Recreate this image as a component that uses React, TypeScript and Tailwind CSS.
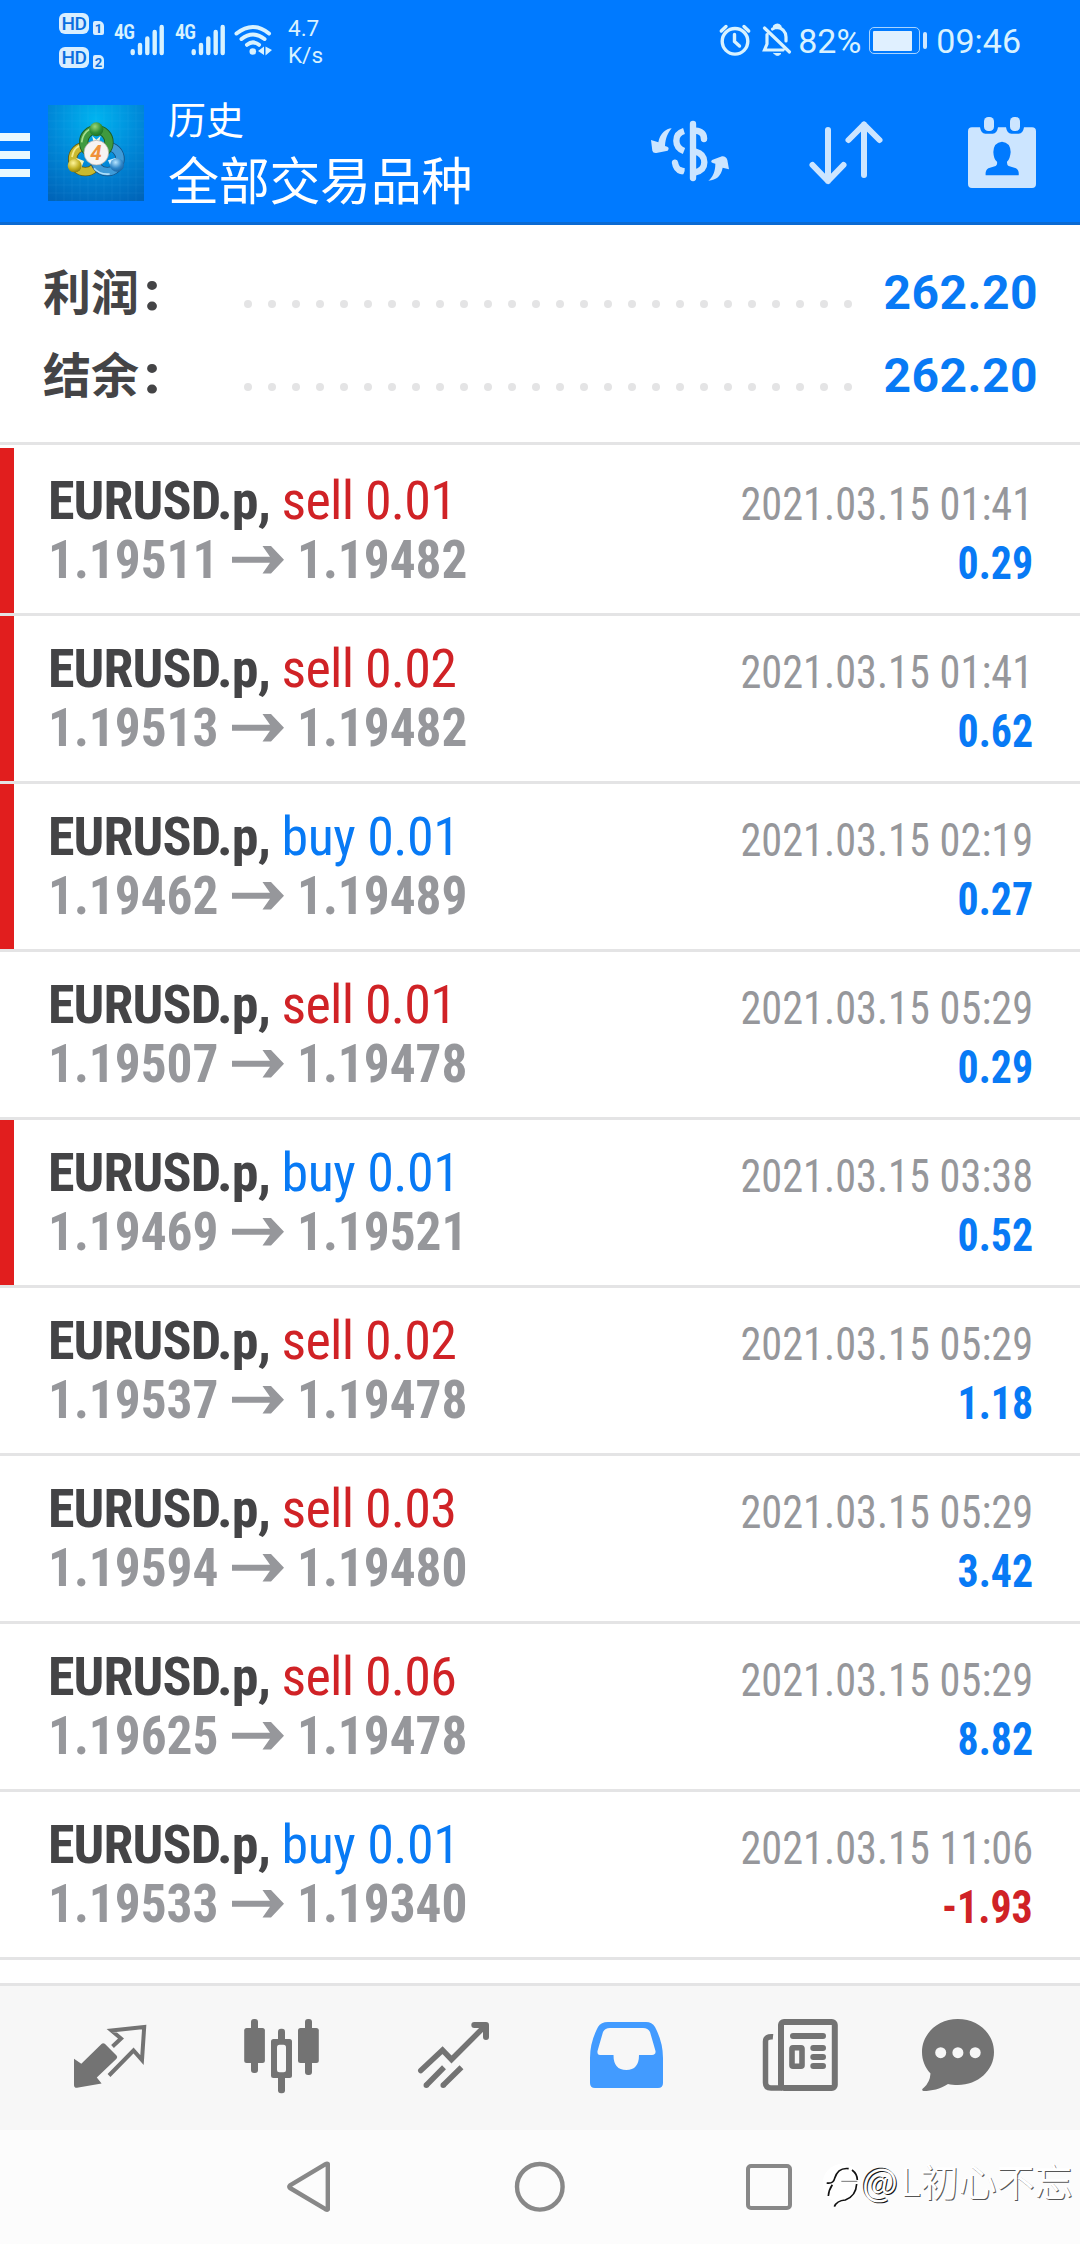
import React from 'react';

type Side = 'buy' | 'sell';

interface Deal {
  side: Side;
  lots: string;
  open: string;
  close: string;
  time: string;
  profit: string;
  marked?: boolean;
}

const DEALS: Deal[] = [
  { side: 'sell', lots: '0.01', open: '1.19511', close: '1.19482', time: '2021.03.15 01:41', profit: '0.29', marked: true },
  { side: 'sell', lots: '0.02', open: '1.19513', close: '1.19482', time: '2021.03.15 01:41', profit: '0.62', marked: true },
  { side: 'buy', lots: '0.01', open: '1.19462', close: '1.19489', time: '2021.03.15 02:19', profit: '0.27', marked: true },
  { side: 'sell', lots: '0.01', open: '1.19507', close: '1.19478', time: '2021.03.15 05:29', profit: '0.29' },
  { side: 'buy', lots: '0.01', open: '1.19469', close: '1.19521', time: '2021.03.15 03:38', profit: '0.52', marked: true },
  { side: 'sell', lots: '0.02', open: '1.19537', close: '1.19478', time: '2021.03.15 05:29', profit: '1.18' },
  { side: 'sell', lots: '0.03', open: '1.19594', close: '1.19480', time: '2021.03.15 05:29', profit: '3.42' },
  { side: 'sell', lots: '0.06', open: '1.19625', close: '1.19478', time: '2021.03.15 05:29', profit: '8.82' },
  { side: 'buy', lots: '0.01', open: '1.19533', close: '1.19340', time: '2021.03.15 11:06', profit: '-1.93' },
];

/* ---------- status bar ---------- */

function HdBadge({ n }: { n: string }) {
  return (
    <div className="flex items-end gap-1">
      <span className="flex h-[21px] w-[30px] items-center justify-center rounded-[6px] bg-[#d8eeff] font-['Roboto'] text-[19px] leading-none font-medium tracking-[-0.5px] text-[#0a6fe0]">
        HD
      </span>
      <span className="-mb-px flex h-[14px] w-[11px] items-center justify-center rounded-[2px] rounded-tr-[5px] bg-[#d8eeff] font-['Roboto'] text-[13px] leading-none font-bold text-[#0a6fe0]">
        {n}
      </span>
    </div>
  );
}

function Signal() {
  return (
    <div className="relative h-[31px] w-[51px]">
      <span className="absolute -top-[3px] left-0 font-['Roboto_Condensed'] text-[20px] leading-[20px] font-semibold tracking-[-0.8px] text-[#d8f2ff]">
        4G
      </span>
      <svg viewBox="131 24 35 32" className="absolute right-0 bottom-0 h-8 w-[35px]">
        <g stroke="#d8f2ff" strokeWidth="4.4" strokeLinecap="round">
          <path d="M133.7 51.3V53M141 45V53M148.3 38.5V53M155.7 32V53M162.7 27V53" />
        </g>
      </svg>
    </div>
  );
}

function StatusBar() {
  return (
    <div className="flex h-[80px] items-start justify-between pr-[59px] pl-[59px] text-[#d8f2ff]">
      <div className="flex">
        <div className="flex flex-col gap-[13px] pt-[13px]">
          <HdBadge n="1" />
          <HdBadge n="2" />
        </div>
        <div className="ml-[10px] flex gap-[10px] pt-[25px]">
          <Signal />
          <Signal />
        </div>
        <svg viewBox="233 22 40 36" className="mt-[22px] ml-[7px] h-[36px] w-[40px]" fill="none" stroke="#d8f2ff" strokeWidth="4" strokeLinecap="round">
          <path d="M236.5 33.5Q253 20.500 269 33.500M241.500 39Q253 30 264.500 39M247 44.800Q253 40 259 44.800" />
          <circle cx="252.800" cy="51.500" r="3.300" fill="#d8f2ff" stroke="none" />
          <path d="M264 46.500V55L258 51ZM265.500 46.500V55.500L272 50Z" fill="#d8f2ff" stroke="none" />
        </svg>
        <div className="ml-[15px] pt-[15px] font-['Roboto'] text-[22.500px] leading-[27px]">
          <div className="text-[#d8f2ff]">4.7</div>
          <div className="text-[#d8f2ff]">K/s</div>
        </div>
      </div>

      <div className="flex pt-[20px] font-['Roboto'] text-[34px] leading-[42px]">
        <svg viewBox="718 20 34 40" className="h-10 w-[34px]" fill="none" stroke="#d8f2ff" strokeWidth="3.400" strokeLinecap="round">
          <circle cx="735" cy="41.300" r="12.800" />
          <path d="M734.500 34.500V41.500L739.500 46M721.300 31L726 26.500M748.700 31L744 26.500" />
        </svg>
        <svg viewBox="761 20 34 40" className="ml-[9px] h-10 w-[34px]" fill="none" stroke="#d8f2ff" strokeWidth="3.200" strokeLinecap="round">
          <path d="M764.500 28L789.500 52M767 34.500V44L764.500 50H783M772.500 29Q775 27.500 777 27.500Q785.500 28.500 786 37V41" />
          <path d="M774.500 26.500Q777.500 23.500 780 26.500" />
          <path d="M774 53.500H781Q777.500 57.500 774 53.500Z" fill="#d8f2ff" strokeWidth="1" />
        </svg>
        <span className="ml-[3px]">82%</span>
        <div className="mt-[7px] ml-[8px] flex h-[27px] w-[51px] rounded-[5px] border-[1.500px] border-[#a8d4ff] p-[2.500px]">
          <div className="h-full w-[39px] rounded-[1px] bg-[#e0f0ff]" />
        </div>
        <div className="mt-[12px] ml-[3px] h-[17px] w-[4px] rounded-full bg-[#cfe8ff]" />
        <span className="ml-[9px]">09:46</span>
      </div>
    </div>
  );
}

/* ---------- app bar ---------- */

function AppLogo() {
  return (
    <svg viewBox="0 0 288 288" className="h-24 w-24">
      <defs>
        <radialGradient id="sky" cx="50%" cy="15%" r="95%">
          <stop offset="0" stopColor="#00b4f0" />
          <stop offset=".5" stopColor="#0088d8" />
          <stop offset="1" stopColor="#0064b8" />
        </radialGradient>
        <radialGradient id="green" cx="40%" cy="30%" r="75%">
          <stop offset="0" stopColor="#9bd67a" />
          <stop offset=".6" stopColor="#2f8f35" />
          <stop offset="1" stopColor="#1b6a24" />
        </radialGradient>
        <radialGradient id="gold" cx="40%" cy="30%" r="75%">
          <stop offset="0" stopColor="#fff59a" />
          <stop offset=".6" stopColor="#c2b021" />
          <stop offset="1" stopColor="#86780c" />
        </radialGradient>
        <radialGradient id="azure" cx="40%" cy="30%" r="75%">
          <stop offset="0" stopColor="#b5e4ff" />
          <stop offset=".6" stopColor="#2f86c8" />
          <stop offset="1" stopColor="#1660a0" />
        </radialGradient>
      </defs>
      <rect width="288" height="288" fill="url(#sky)" />
      <path
        d="M24 0V288M48 0V288M72 0V288M96 0V288M120 0V288M144 0V288M168 0V288M192 0V288M216 0V288M240 0V288M264 0V288M0 24H288M0 48H288M0 72H288M0 96H288M0 120H288M0 144H288M0 168H288M0 192H288M0 216H288M0 240H288M0 264H288"
        stroke="#6fd0ff"
        strokeOpacity=".13"
        strokeWidth="2"
      />
      <g fill="none">
        <circle cx="112" cy="162" r="38" stroke="#5f5a10" strokeWidth="28" />
        <circle cx="112" cy="162" r="38" stroke="#c9b92f" strokeWidth="23" />
        <path d="M72 156Q78 120 112 118" stroke="#f3eb8c" strokeWidth="5" />
        <circle cx="178" cy="162" r="38" stroke="#154f80" strokeWidth="28" />
        <circle cx="178" cy="162" r="38" stroke="#3f9bd8" strokeWidth="23" />
        <path d="M138 190Q155 210 185 207" stroke="#b0e0fa" strokeWidth="5" />
        <circle cx="145" cy="112" r="38" stroke="#1d5c22" strokeWidth="28" />
        <circle cx="145" cy="112" r="38" stroke="#3f9a3f" strokeWidth="23" />
        <path d="M101 112Q104 84 126 72" stroke="#a5de8e" strokeWidth="5" />
      </g>
      <path d="M132 92L145 104L158 92L152 116H138Z" fill="#e9f6e2" />
      <path d="M84 158L108 168L100 188L92 176Z" fill="#f6f2b8" />
      <path d="M204 158L180 166L190 188L198 176Z" fill="#d6f0ff" />
      <circle cx="145" cy="73" r="21" fill="url(#green)" />
      <ellipse cx="80" cy="182" rx="21" ry="20" fill="url(#gold)" />
      <ellipse cx="207" cy="180" rx="21" ry="20" fill="url(#azure)" />
      <circle cx="145" cy="143" r="37" fill="#f6f4f2" stroke="#a9a9a4" strokeWidth="2" />
      <text x="144" y="165" textAnchor="middle" fontFamily="Roboto" fontWeight="700" fontStyle="italic" fontSize="62" fill="#f0913a">
        4
      </text>
    </svg>
  );
}

function CurrencyIcon() {
  return (
    <svg viewBox="0 0 300 270" className="h-[90px] w-[100px]" fill="none" stroke="#cce5ff" strokeWidth="19">
      <path d="M159 42V204" strokeLinecap="round" />
      <path d="M132 63Q109 70 109 92Q109 114 132 123M166 62Q192 64 192 86M166 125Q193 132 193 157Q193 181 166 187" />
      <path d="M192 84V87M105 158Q108 178 124 183" strokeLinecap="round" />
      <path d="M118 180L132 184" />
      <path d="M95 55C78 56 60 70 55 97L33 90L37 122Q39 130 49 129L83 122Q92 111 75 108C76 84 84 68 95 55Z" fill="#cce5ff" stroke="none" />
      <path d="M205 212C230 210 243 198 248 173L267 178L262 150Q258 138 246 139L216 150Q208 158 226 161C226 185 218 202 205 212Z" fill="#cce5ff" stroke="none" />
    </svg>
  );
}

function SortIcon() {
  return (
    <svg viewBox="808 119 76 67" className="h-[67px] w-[76px]" fill="none" stroke="#cce5ff" strokeWidth="6" strokeLinecap="round" strokeLinejoin="round">
      <path d="M828 130V181M812.500 165L828 181L843.500 165M864 175V124.500M848.500 140L864 124.500L879.500 140" />
    </svg>
  );
}

function CalendarIcon() {
  return (
    <svg viewBox="1044 350 204 213" className="h-[71px] w-[68px]">
      <path
        d="M1056 381H1080Q1083 400 1096 400H1118Q1131 400 1134 381H1158Q1161 400 1174 400H1196Q1209 400 1212 381H1236Q1248 381 1248 393V551Q1248 563 1236 563H1056Q1044 563 1044 551V393Q1044 381 1056 381Z"
        fill="#cce5ff"
      />
      <rect x="1092" y="350" width="30" height="42" rx="13" fill="#cce5ff" />
      <rect x="1170" y="350" width="30" height="42" rx="13" fill="#cce5ff" />
      <path
        d="M1146 424Q1171 426 1172 455Q1170 478 1161 484Q1160 493 1166 497L1188 504Q1198 510 1196 525H1097Q1095 510 1105 504L1127 497Q1133 493 1131 484Q1121 478 1120 455Q1121 426 1146 424Z"
        fill="#007aff"
      />
    </svg>
  );
}

function AppBar() {
  return (
    <div className="flex h-[142px] items-start">
      <div className="mt-[53px] flex w-[30px] flex-col gap-[10px]">
        <span className="h-2 bg-[#e8f8ff]" />
        <span className="h-2 bg-[#e8f8ff]" />
        <span className="h-2 bg-[#e8f8ff]" />
      </div>
      <div className="mt-[25px] ml-[18px]">
        <AppLogo />
      </div>
      <div className="mt-[8px] ml-[24px] font-['Noto_Sans_CJK_SC',sans-serif] whitespace-nowrap text-white">
        <div className="text-[38px] leading-[60px]">历史</div>
        <div className="text-[51px] leading-[60px] tracking-[-0.3px]">全部交易品种</div>
      </div>
      <div className="ml-auto flex items-start pr-[44px]">
        <div className="mt-[30px]">
          <CurrencyIcon />
        </div>
        <div className="mt-[39px] ml-[68px]">
          <SortIcon />
        </div>
        <div className="mt-[36.500px] ml-[84px]">
          <CalendarIcon />
        </div>
      </div>
    </div>
  );
}

/* ---------- summary ---------- */

function SummaryRow({ label, value }: { label: string; value: string }) {
  return (
    <div className="flex h-[83px] items-start pl-[43px]">
      <div className="w-[201px] pt-px font-['Noto_Sans_CJK_SC',sans-serif] text-[48px] leading-[83px] font-bold text-[#444446]">
        {label}
        <span className="ml-[5px] font-['Roboto'] text-[54px] leading-none font-black">:</span>
      </div>
      <div className="mt-[53px] flex w-[608px] justify-between">
        {Array.from({ length: 26 }, (_, i) => (
          <span key={i} className="h-2 w-2 rounded-full bg-[#e4e4e5]" />
        ))}
      </div>
      <div className="ml-auto pt-[4px] pr-[42px] font-['Roboto'] text-[48px] leading-[83px] font-bold tracking-[0.5px] text-[#087af5]">
        {value}
      </div>
    </div>
  );
}

/* ---------- deals ---------- */

function PriceArrow() {
  return (
    <svg viewBox="0 0 52 28" className="h-7 w-[52px]" fill="#96979b">
      <path d="M0 10.800H38L30.500 0H39L52 13.800L39 27.500H30.500L38 16.800H0Z" />
    </svg>
  );
}

function DealRow({ deal }: { deal: Deal }) {
  const sideColor = deal.side === 'sell' ? 'text-[#d02226] tracking-[-0.75px]' : 'text-[#087af5] tracking-[-0.5px]';
  const profitColor = deal.profit.startsWith('-') ? 'text-[#d02226]' : 'text-[#087af5]';
  return (
    <div className="flex h-[168px] items-stretch border-b-[3px] border-[#e4e4e5] font-['Roboto_Condensed']">
      <div className={deal.marked ? 'w-[14px] bg-[#e11e1e]' : 'w-[14px]'} />
      <div className="flex flex-1 justify-between pr-[47px] pl-[34px] whitespace-pre">
        <div className="pt-[23px] text-[54px] leading-[59px]">
          <div>
            <span className="font-bold tracking-[-0.9px] text-[#444446]">EURUSD.p, </span>
            <span className={sideColor}>
              {deal.side} {deal.lots}
            </span>
          </div>
          <div className="flex font-bold text-[#96979b]">
            <span className="w-[184px] origin-left scale-x-[0.95]">{deal.open}</span>
            <span className="mt-[16px] w-[65px]">
              <PriceArrow />
            </span>
            <span className="origin-left scale-x-[0.95]">{deal.close}</span>
          </div>
        </div>
        <div className="flex flex-col items-end pt-[27px] text-[46px] leading-[59px]">
          <div className="origin-right scale-x-[0.92] text-[#96979b]">{deal.time}</div>
          <div className={`origin-right scale-x-[0.91] font-bold ${profitColor}`}>{deal.profit}</div>
        </div>
      </div>
    </div>
  );
}

/* ---------- bottom tabs ---------- */

function TradeIcon() {
  return (
    <svg viewBox="72 2022 78 70" className="h-[70px] w-[78px]">
      <path d="M112.500 2046.500L121 2038.500L111.500 2030.500L144.200 2027L142 2060L133.500 2050.500L109 2075.500" fill="none" stroke="#737373" strokeWidth="4" />
      <path d="M74 2058.700L81.300 2063.700L101.500 2044Q103 2042.500 104.800 2043.800L116.500 2055.500Q118 2057 116.500 2058.800L96.800 2077.500L101.600 2083.500L77 2087.800Q74 2088 74 2085Z" fill="#737373" />
    </svg>
  );
}

function ChartIcon() {
  return (
    <svg viewBox="242 2017 79 78" className="h-[78px] w-[79px]" fill="#737373">
      <rect x="251" y="2019" width="7" height="54" rx="3" />
      <rect x="244.200" y="2028" width="20.700" height="35" rx="2.500" />
      <rect x="305" y="2019" width="7" height="56" rx="3" />
      <rect x="298" y="2028" width="20.800" height="35" rx="2.500" />
      <rect x="278" y="2028.700" width="7" height="64.500" rx="3" />
      <rect x="271" y="2039" width="21" height="39" rx="2.500" />
      <rect x="277" y="2044.700" width="9" height="27.500" rx="2.500" fill="#f7f7f7" />
    </svg>
  );
}

function TrendIcon() {
  return (
    <svg viewBox="416 2019 76 72" className="h-[72px] w-[76px]" fill="none" stroke="#737373" strokeWidth="5.500">
      <path d="M420.800 2070.500L442.500 2050.200L451.500 2059.500L485 2026" strokeLinecap="round" />
      <path d="M474.300 2025H486V2037" strokeWidth="6" strokeLinecap="round" strokeLinejoin="round" />
      <path d="M426.300 2085.300H426.310M443.200 2085.300H443.210" strokeLinecap="round" />
      <path d="M426.300 2085.300L444 2067.300M443.200 2085.300L461.500 2067.300" />
    </svg>
  );
}

function InboxIcon() {
  return (
    <svg viewBox="590 2022 73 66" className="h-[66px] w-[73px]">
      <path
        fillRule="evenodd"
        d="M608 2022H646Q652 2022 655 2027Q663 2042 663 2058V2083Q663 2088 658 2088H595Q590 2088 590 2083V2058Q590 2042 598 2027Q601 2022 608 2022ZM610 2028Q605 2028 603 2032L597.500 2051Q597 2055 600 2055H613.500Q613.500 2070 626.300 2070Q639 2070 639 2055H652Q656 2055 655.500 2051L650 2032Q648 2028 643 2028Z"
        fill="#429bff"
      />
    </svg>
  );
}

function NewsIcon() {
  return (
    <svg viewBox="762 2018 77 74" className="h-[74px] w-[77px]" fill="none" stroke="#737373">
      <rect x="781" y="2022" width="53.800" height="66" rx="3" strokeWidth="6" />
      <path d="M773 2036.800Q765.500 2036 765.500 2041.500V2082.500Q765.500 2088 771 2088H782" strokeWidth="5.500" />
      <path d="M793 2036H823M813.300 2048H823M813.300 2057H823M813.300 2066H823" strokeWidth="6" strokeLinecap="round" />
      <rect x="792" y="2047.800" width="10" height="18.400" rx="1" strokeWidth="5.600" />
    </svg>
  );
}

function ChatIcon() {
  return (
    <svg viewBox="921 2018 74 74" className="h-[74px] w-[74px]">
      <path
        d="M957.800 2019C978 2019 994 2033.500 994 2052C994 2070.500 978 2085 957.800 2085C954 2085 951 2084.600 948 2084C940 2089 932 2091 923.500 2091Q920.500 2090 924 2087.500Q930 2082 930.500 2073.500C925 2067.500 922 2060 922 2052C922 2033.500 938 2019 957.800 2019Z"
        fill="#737373"
      />
      <circle cx="940.700" cy="2052.700" r="5.500" fill="#f7f7f7" />
      <circle cx="957.900" cy="2052.700" r="5.500" fill="#f7f7f7" />
      <circle cx="975.200" cy="2052.700" r="5.500" fill="#f7f7f7" />
    </svg>
  );
}

function TabBar() {
  return (
    <div className="flex h-[147px] items-start border-t-[3px] border-[#e4e4e5] bg-[#f7f7f7]">
      <div className="mt-[36px] ml-[72px]"><TradeIcon /></div>
      <div className="mt-[31px] ml-[92px]"><ChartIcon /></div>
      <div className="mt-[33px] ml-[95px]"><TrendIcon /></div>
      <div className="mt-[36px] ml-[98px]"><InboxIcon /></div>
      <div className="mt-[32px] ml-[99px]"><NewsIcon /></div>
      <div className="mt-[32px] ml-[82px]"><ChatIcon /></div>
    </div>
  );
}

function SystemNav() {
  return (
    <div className="relative flex h-[114px] items-start bg-[#fcfcfc] pt-[30px]">
      <svg viewBox="285 2160 47 54" className="ml-[285px] h-[54px] w-[47px]" fill="none" stroke="#888" strokeWidth="4.400" strokeLinejoin="round">
        <path d="M327.800 2164V2209.500Q327 2210 325.500 2209.200L290 2188Q288.500 2186.700 290 2185.400L325.500 2164.200Q327 2163.300 327.800 2164Z" />
      </svg>
      <svg viewBox="513 2160 54 54" className="ml-[181px] h-[54px] w-[54px]" fill="none" stroke="#888" strokeWidth="4.400">
        <circle cx="539.800" cy="2186.800" r="22.800" />
      </svg>
      <div className="mt-[4px] ml-[179px] h-[46px] w-[46px] rounded-[5px] border-[4.400px] border-[#888]" />

      {/* watermark */}
      <div className="absolute top-[25px] left-[820px] flex font-['Noto_Sans_CJK_SC',sans-serif] text-[38px] leading-[50px] text-white">
        <svg viewBox="0 330 120 150" className="mt-[5px] h-[50px] w-[40px]" fill="none">
          <circle cx="66" cy="400" r="58" fill="#fff" />
          <path d="M20 399Q40 402 44 385Q54 352 86 356M37 404Q26 420 25 438M96 360Q112 372 112 390M110 402Q108 438 76 450Q50 452 43 470" stroke="#111" strokeWidth="5" />
          <path d="M64 394H112" stroke="#777" strokeWidth="3" />
        </svg>
        <span className="ml-[2px] [text-shadow:1px_1px_0_#111,-1px_-1px_0_#222]">@</span>
        <span className="ml-[2px] [text-shadow:1px_1px_0_#555]">L初心不忘</span>
      </div>
    </div>
  );
}

export default function App() {
  return (
    <div className="flex h-[2244px] w-[1080px] flex-col overflow-hidden bg-white">
      <header className="h-[225px] border-b-[3px] border-[#0b6ad2] bg-[#007aff]">
        <StatusBar />
        <AppBar />
      </header>

      <section className="h-[220px] border-b-[3px] border-[#e4e4e5] pt-[22px]">
        <SummaryRow label="利润" value="262.20" />
        <SummaryRow label="结余" value="262.20" />
      </section>

      <main className="flex-1 overflow-hidden pt-[3px]">
        {DEALS.map((d, i) => (
          <DealRow key={i} deal={d} />
        ))}
      </main>

      <TabBar />
      <SystemNav />
    </div>
  );
}
